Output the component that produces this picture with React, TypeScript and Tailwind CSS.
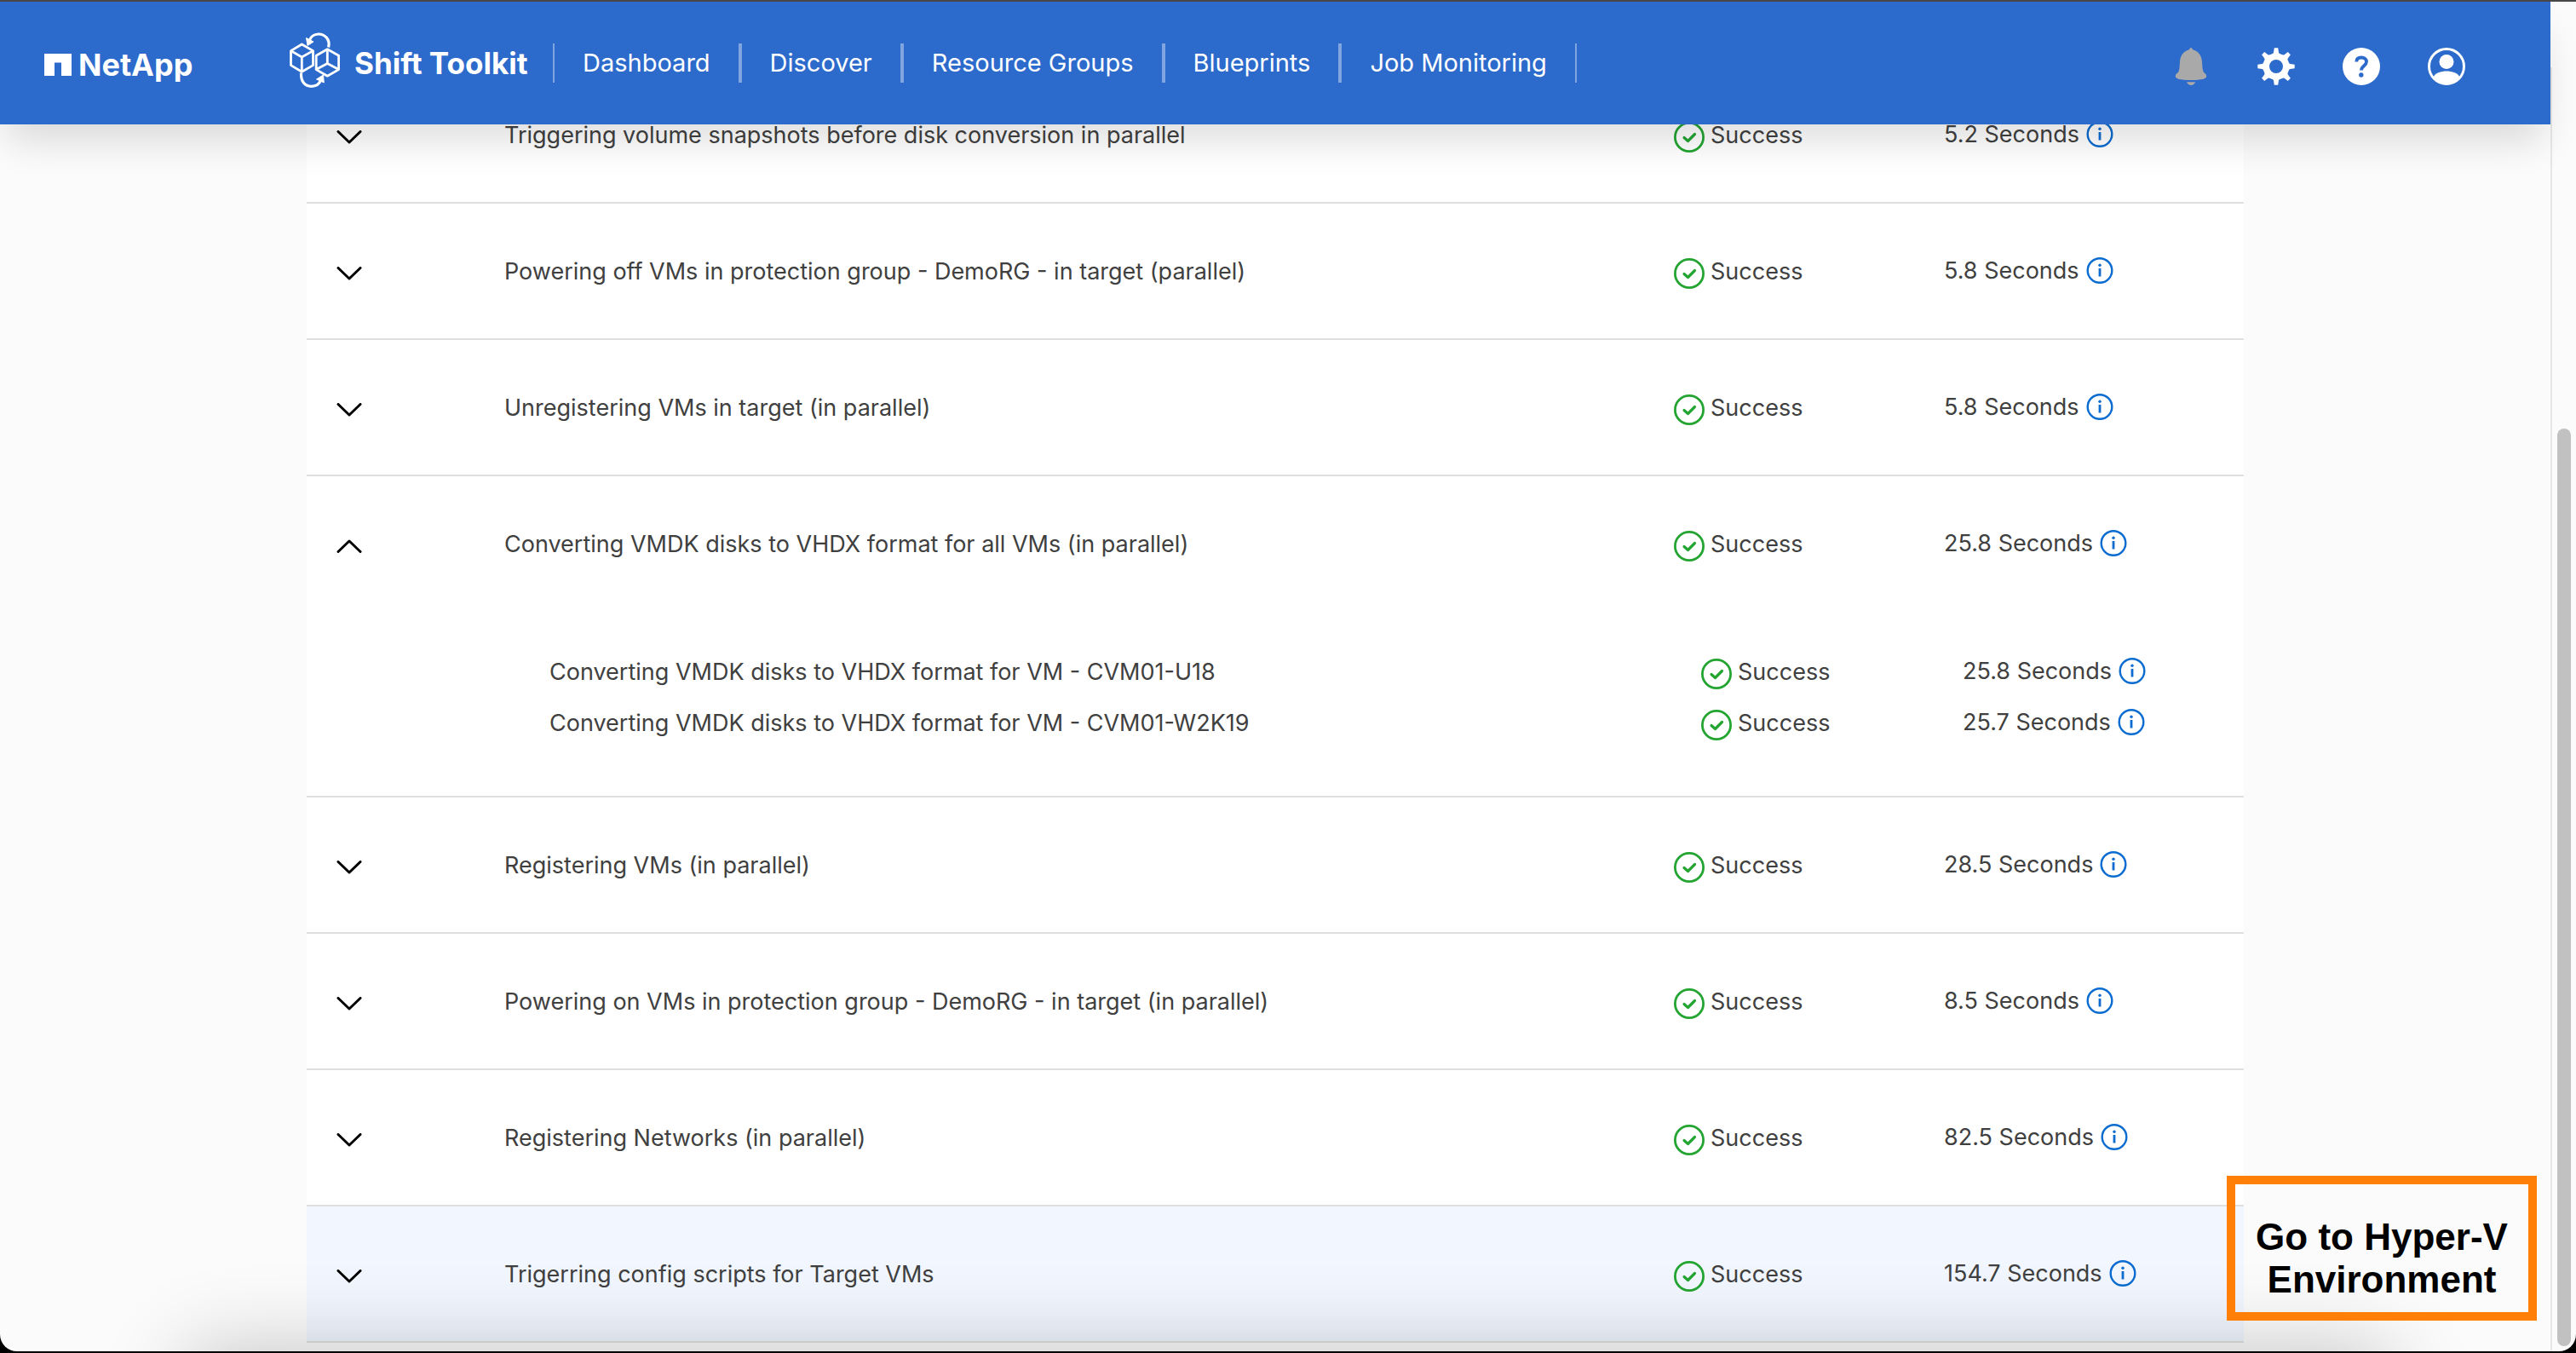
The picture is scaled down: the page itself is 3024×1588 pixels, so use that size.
import { useState } from 'react';

type SubStep = {
  title: string;
  duration: string;
};

type Step = {
  id: number;
  title: string;
  duration: string;
  highlighted?: boolean;
  children?: SubStep[];
};

const navItems = ['Dashboard', 'Discover', 'Resource Groups', 'Blueprints', 'Job Monitoring'];

const steps: Step[] = [
  { id: 1, title: 'Triggering volume snapshots before disk conversion in parallel', duration: '5.2' },
  {
    id: 2,
    title: 'Powering off VMs in protection group - DemoRG - in target (parallel)',
    duration: '5.8',
  },
  { id: 3, title: 'Unregistering VMs in target (in parallel)', duration: '5.8' },
  {
    id: 4,
    title: 'Converting VMDK disks to VHDX format for all VMs (in parallel)',
    duration: '25.8',
    children: [
      { title: 'Converting VMDK disks to VHDX format for VM - CVM01-U18', duration: '25.8' },
      { title: 'Converting VMDK disks to VHDX format for VM - CVM01-W2K19', duration: '25.7' },
    ],
  },
  { id: 5, title: 'Registering VMs (in parallel)', duration: '28.5' },
  {
    id: 6,
    title: 'Powering on VMs in protection group - DemoRG - in target (in parallel)',
    duration: '8.5',
  },
  { id: 7, title: 'Registering Networks (in parallel)', duration: '82.5' },
  { id: 8, title: 'Trigerring config scripts for Target VMs', duration: '154.7', highlighted: true },
];

const ToolkitLogo = () => (
  <svg
    className="mb-1.5 w-[60px] h-[66px]"
    viewBox="0 0 60 66"
    fill="none"
    stroke="white"
    strokeWidth={2.8}
    strokeLinejoin="round"
  >
    <path d="M14.3 14 27.5 21.6V38.6L14.3 46.2 1.5 38.6V21.6Z" />
    <path d="M1.5 21.6 14.3 29 27.5 21.6M14.3 29V46" />
    <path d="M44.3 19.8 57.6 27.2V43.6L44.3 51.2 31.2 43.6V27.2Z" />
    <path d="M44.3 20V37.4M31.2 43.6 44.3 36.6 57.6 43.6" />
    <path d="M45.6 17.5C48 8 41 1.8 33.8 2 28.5 2.2 25 5 23.5 9" strokeWidth={3.2} />
    <path d="M19.5 6.5 28 11 21 15.5Z" fill="white" strokeWidth={1} />
    <path d="M13.5 47.5C13 58 18 63.3 25.5 63.3 31.5 63.3 35 60.5 36.5 56" strokeWidth={3.2} />
    <path d="M39.5 50 40.3 59 31.5 55Z" fill="white" strokeWidth={1} />
  </svg>
);

const BellIcon = () => (
  <svg className="size-11" viewBox="0 0 44 44" fill="#a9a9a9">
    <path d="M22 0c1.2 0 1.6 1.8 2.6 2.5C31 4.5 34.5 9 35 16.5c.3 6 .8 10 1.6 11.8.8 1.6 3.6 2.2 3.6 5.2 0 3-5.5 4.5-18.2 4.5S3.8 36.5 3.8 33.5c0-3 2.8-3.6 3.6-5.2.8-1.8 1.3-5.8 1.6-11.8C9.5 9 13 4.5 19.4 2.5 20.4 1.8 20.8 0 22 0Z" />
    <path d="M17 40.2h10.2c-.8 2.3-2.8 3.8-5.1 3.8S17.8 42.5 17 40.2Z" />
  </svg>
);

const GearIcon = () => (
  <svg className="size-11" viewBox="0 0 44 44" fill="white">
    {[0, 45, 90, 135, 180, 225, 270, 315].map((angle) => (
      <path
        key={angle}
        d="M19.8 .3H24.2L25 5.5C25.3 7 27 7.8 28.5 8.5H15.5C17 7.8 18.7 7 19 5.5Z"
        transform={`rotate(${angle} 22 22)`}
      />
    ))}
    <path
      fillRule="evenodd"
      d="M22 6.5A15.5 15.5 0 1 1 22 37.5 15.5 15.5 0 1 1 22 6.5ZM22 14A8 8 0 1 0 22 30 8 8 0 1 0 22 14Z"
    />
  </svg>
);

const HelpIcon = () => (
  <svg className="size-11" viewBox="0 0 44 44" fill="none">
    <circle cx="22" cy="22" r="22" fill="white" />
    <path
      d="M16.3 16.5C16.3 13 18.8 11.5 22 11.5c3.4 0 6 1.9 6 5 0 4.600-6 5-6 10"
      stroke="#2c6acc"
      strokeWidth={3.8}
    />
    <circle cx="21.8" cy="32" r="2.7" fill="#2c6acc" />
  </svg>
);

const UserIcon = () => (
  <svg className="size-11" viewBox="0 0 44 44" fill="none">
    <circle cx="22" cy="22" r="20.5" stroke="white" strokeWidth={3} />
    <circle cx="22" cy="16.5" r="8.5" fill="white" />
    <path d="M6.5 34.5C9 29.5 15 27.5 22 27.5s13 2 15.5 7C34 40 28.5 43 22 43S10 40 6.5 34.5Z" fill="white" />
  </svg>
);

const Chevron = ({ open }: { open: boolean }) => (
  <svg
    className="w-[30px] h-4"
    viewBox="0 0 30 16"
    fill="none"
    stroke="black"
    strokeWidth={3}
    strokeLinecap="round"
    strokeLinejoin="round"
  >
    <path d={open ? 'M2 14.5 15 2 28 14.5' : 'M2 1.5 15 14 28 1.5'} />
  </svg>
);

const Status = () => (
  <div className="flex items-start gap-[7px] pt-1">
    <svg className="mt-[2px] size-9" viewBox="0 0 36 36" fill="none" stroke="#24a532">
      <circle cx="18" cy="18" r="16.6" strokeWidth={2.8} />
      <path d="M12 18.5 16.5 22.5 24.5 14.5" strokeWidth={3.2} strokeLinecap="round" strokeLinejoin="round" />
    </svg>
    <span>Success</span>
  </div>
);

const Duration = ({ value }: { value: string }) => (
  <div className="flex items-center gap-2">
    <span>{value} Seconds</span>
    <button type="button" aria-label="Step details">
      <svg className="block size-8" viewBox="0 0 32 32" fill="none" stroke="#0a6cd0">
        <circle cx="16" cy="15.5" r="14.3" strokeWidth={2.4} />
        <path d="M16 13V22.5" strokeWidth={2.8} />
        <circle cx="16" cy="9.3" r="1.7" fill="#0a6cd0" stroke="none" />
      </svg>
    </button>
  </div>
);

const Header = () => (
  <header className="relative z-10 mr-[30px] flex h-36 items-center justify-between bg-[#2c6acc] pl-[52px] pr-[100px] text-white shadow-[0_28px_44px_-8px_rgba(0,0,0,0.13)]">
    <div className="flex items-center">
      <a href="#" className="flex w-72 items-center gap-2 pt-1">
        <svg className="w-8 h-[26px]" viewBox="0 0 32 26" fill="white">
          <path d="M0 0H32V26H20V10.5H12V26H0Z" />
        </svg>
        <span className="text-[36px] leading-9 font-bold">NetApp</span>
      </a>
      <a href="#" className="flex w-[309px] items-center gap-4">
        <ToolkitLogo />
        <span className="text-[35px] leading-9 font-bold whitespace-nowrap">Shift Toolkit</span>
      </a>
      <nav className="flex border-x-2 border-white/40">
        {navItems.map((item, index) => (
          <a
            key={item}
            href="#"
            className={`px-[33px] text-[29px] leading-[46px] whitespace-nowrap ${
              index > 0 ? 'border-l-4 border-white/40' : ''
            }`}
          >
            {item}
          </a>
        ))}
      </nav>
    </div>
    <div className="flex gap-14 pt-2">
      <button type="button" aria-label="Notifications">
        <BellIcon />
      </button>
      <button type="button" aria-label="Settings">
        <GearIcon />
      </button>
      <button type="button" aria-label="Help">
        <HelpIcon />
      </button>
      <button type="button" aria-label="Account">
        <UserIcon />
      </button>
    </div>
  </header>
);

const SubSteps = ({ items }: { items: SubStep[] }) => (
  <table className="w-full table-fixed">
    <tbody>
      {items.map((item) => (
        <tr key={item.title} className="h-[60px]">
          <td className="pt-[2px] pl-[285px]">{item.title}</td>
          <td className="w-[307px]">
            <Status />
          </td>
          <td className="w-[330px]">
            <Duration value={item.duration} />
          </td>
        </tr>
      ))}
    </tbody>
  </table>
);

export default function App() {
  const [openId, setOpenId] = useState<number | null>(4);

  return (
    <div className="min-h-screen bg-black pb-[2px] font-['Inter',sans-serif] text-[#404040]">
      <div className="relative flex min-h-[calc(100vh-2px)] flex-col overflow-hidden rounded-b-[20px] border-t-2 border-[#474747] bg-[#fbfbfb]">
        <Header />

        <div className="-mt-[67px] flex flex-1 pr-[28px]">
          <main className="flex-1 border-r-2 border-[#e6e6e6] px-[360px]">
            <table className="w-full table-fixed border-separate border-spacing-0 bg-white text-[27px] leading-9">
              <colgroup>
                <col className="w-[232px]" />
                <col />
                <col className="w-[317px]" />
                <col className="w-[352px]" />
              </colgroup>
              {steps.map((step) => {
                const isOpen = step.id === openId && !!step.children;
                const line = isOpen ? '' : 'border-b-2 border-[#dfdfdf]';

                return (
                  <tbody key={step.id} className={step.highlighted ? 'bg-[#f1f6ff]' : ''}>
                    <tr className={isOpen ? 'h-[158px]' : 'h-40'}>
                      <td className={`pl-[35px] ${line}`}>
                        <button
                          type="button"
                          aria-label={isOpen ? 'Collapse' : 'Expand'}
                          aria-expanded={isOpen}
                          className="block pt-[6px]"
                          onClick={() => setOpenId(isOpen ? null : step.id)}
                        >
                          <Chevron open={isOpen} />
                        </button>
                      </td>
                      <td className={`pt-[2px] ${line}`}>{step.title}</td>
                      <td className={line}>
                        <Status />
                      </td>
                      <td className={line}>
                        <Duration value={step.duration} />
                      </td>
                    </tr>
                    {isOpen && step.children && (
                      <tr>
                        <td colSpan={4} className="border-b-2 border-[#dfdfdf] pt-[41px] pb-14">
                          <SubSteps items={step.children} />
                        </td>
                      </tr>
                    )}
                  </tbody>
                );
              })}
            </table>
          </main>
        </div>

        {/* scrollbar thumb */}
        <div className="absolute top-[501px] right-[6px] bottom-[6px] w-4 rounded-full bg-[#c1c1c1]" />

        {/* dock shadow along the bottom edge */}
        <div className="pointer-events-none absolute inset-x-[220px] top-full h-40 shadow-[0_0_100px_0_rgba(0,0,0,0.23)]" />

        <button
          type="button"
          className="absolute right-[46px] bottom-[36px] h-[170px] w-[364px] border-10 border-[#ff7f07] pt-6 text-center font-['Liberation_Sans',sans-serif] text-[44px] leading-[50px] font-bold text-black"
        >
          Go to Hyper-V Environment
        </button>
      </div>
    </div>
  );
}
